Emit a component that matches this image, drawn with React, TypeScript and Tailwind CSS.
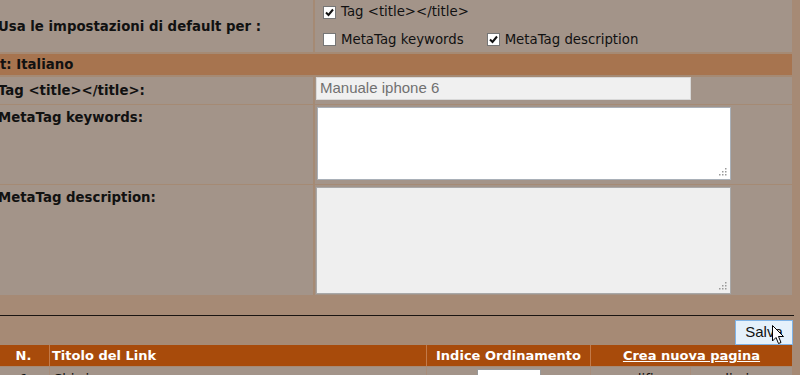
import React from 'react'

const FONT = { fontFamily: '"DejaVu Sans", Verdana, sans-serif' }

function Check({ checked }: { checked?: boolean }) {
  return (
    <span className="inline-flex items-center justify-center w-[13px] h-[13px] bg-white border border-[#767676] shrink-0">
      {checked && (
        <svg width="9" height="9" viewBox="0 0 9 9">
          <path d="M1 4.5 L3.5 7 L8 1.5" fill="none" stroke="#111" strokeWidth="2" />
        </svg>
      )}
    </span>
  )
}

function Label({ children }: { children: React.ReactNode }) {
  return <span className="font-bold text-[13.3px] text-[#111] whitespace-nowrap">{children}</span>
}

export default function App() {
  return (
    <div className="relative w-[800px] h-[375px] overflow-hidden bg-[#a68a75]" style={FONT}>
      {/* settings table */}
      <div className="w-[794px] ml-[-2px] flex flex-col bg-[#a58a74]">
        <div className="flex gap-[2px] h-[52px]">
          <div className="w-[315px] bg-[#a39489] flex items-center pt-[1px]">
            <Label>Usa le impostazioni di default per :</Label>
          </div>
          <div className="flex-1 bg-[#a39489] flex flex-col justify-center gap-[8px] pl-[8px] text-[13.3px] text-[#111]">
            <div className="flex items-center gap-[5px]">
              <Check checked />
              <span>Tag &lt;title&gt;&lt;/title&gt;</span>
            </div>
            <div className="flex items-center gap-[5px]">
              <Check />
              <span>MetaTag keywords</span>
              <span className="ml-[18px]"><Check checked /></span>
              <span>MetaTag description</span>
            </div>
          </div>
        </div>

        <div className="mt-[2px] h-[21px] bg-[#a7744f] flex items-center pl-[2px]">
          <Label>t: Italiano</Label>
        </div>

        <div className="mt-[2px] flex gap-[2px] h-[27px]">
          <div className="w-[315px] bg-[#a39489] flex items-center">
            <Label>Tag &lt;title&gt;&lt;/title&gt;:</Label>
          </div>
          <div className="flex-1 bg-[#a39489] pl-[1px]">
            <div
              className="w-[375px] h-[23px] bg-[#f0f0f0] border border-[#d8d8d8] flex items-center pl-[3px] text-[15px] text-[#707070]"
              style={{ fontFamily: '"Liberation Sans", Arial, sans-serif' }}
            >
              Manuale iphone 6
            </div>
          </div>
        </div>

        <div className="mt-[1px] flex gap-[2px] h-[79px]">
          <div className="w-[315px] bg-[#a39489]">
            <Label>MetaTag keywords:</Label>
          </div>
          <div className="flex-1 bg-[#a39489] pl-[2px] pt-[2px]">
            <div className="relative w-[414px] h-[73px] bg-white border border-[#a9b0b8]">
              <Grip />
            </div>
          </div>
        </div>

        <div className="mt-[1px] flex gap-[2px] h-[110px]">
          <div className="w-[315px] bg-[#a39489]">
            <Label>MetaTag description:</Label>
          </div>
          <div className="flex-1 bg-[#a39489] pl-[1px] pt-[2px]">
            <div className="relative w-[415px] h-[107px] bg-[#efefef] border border-[#a8a8a8]">
              <Grip />
            </div>
          </div>
        </div>
      </div>

      {/* separator + save */}
      <div className="mt-[20px] w-[794px] border-t border-[#1a1512]" />
      <div className="flex justify-end pr-[7px] pt-[4px]">
        <button
          className="w-[58px] h-[25px] bg-[#e5f1fb] border border-[#7fb3e6] text-[15px] text-[#111]"
          style={{ fontFamily: '"Liberation Sans", Arial, sans-serif' }}
        >
          Salva
        </button>
      </div>

      {/* link table */}
      <div className="grid grid-cols-[49px_376px_163px_99px_101px] gap-x-[1px] w-[792px] bg-[#c27a4a] text-[13px]">
        <div className="h-[21px] bg-[#a84b0b] flex items-center justify-center pr-[2px] font-bold text-white">N.</div>
        <div className="h-[21px] bg-[#a84b0b] flex items-center pl-[2px] font-bold text-white">Titolo del Link</div>
        <div className="h-[21px] bg-[#a84b0b] flex items-center justify-center font-bold text-white">Indice Ordinamento</div>
        <div className="col-span-2 h-[21px] bg-[#a84b0b] flex items-center justify-center font-bold text-white underline">
          Crea nuova pagina
        </div>
      </div>
      <div className="grid grid-cols-[49px_376px_163px_99px_101px] gap-x-[1px] w-[792px] mt-[1px] bg-[#a88d7a] text-[13.3px] text-[#111]">
        <div className="h-[22px] bg-[#a39489] flex items-start justify-center pt-[3px]">1</div>
        <div className="h-[22px] bg-[#a39489] pl-[3px] pt-[3px]">Chi siamo</div>
        <div className="h-[22px] bg-[#a39489] flex justify-center pt-[2px]">
          <div className="w-[64px] h-[20px] bg-white border border-[#999]" />
        </div>
        <div className="h-[22px] bg-[#a39489] flex justify-center pt-[3px] underline">modifica</div>
        <div className="h-[22px] bg-[#a39489] flex justify-center pt-[3px] underline">elimina</div>
      </div>

      {/* mouse pointer over the button */}
      <svg className="absolute left-[772px] top-[325px]" width="13" height="20" viewBox="0 0 13 20">
        <path d="M0.5 0.5 L0.5 16 L4 12.5 L6.5 18.5 L9 17.5 L6.5 11.5 L11.5 11.5 Z" fill="white" stroke="black" strokeWidth="1" strokeLinejoin="miter" />
      </svg>
    </div>
  )
}

function Grip() {
  return (
    <svg className="absolute right-[3px] bottom-[3px]" width="8" height="8" viewBox="0 0 8 8">
      <g fill="#9a9a9a">
        <rect x="6" y="0" width="1.5" height="1.5" />
        <rect x="3" y="3" width="1.5" height="1.5" />
        <rect x="6" y="3" width="1.5" height="1.5" />
        <rect x="0" y="6" width="1.5" height="1.5" />
        <rect x="3" y="6" width="1.5" height="1.5" />
        <rect x="6" y="6" width="1.5" height="1.5" />
      </g>
    </svg>
  )
}
